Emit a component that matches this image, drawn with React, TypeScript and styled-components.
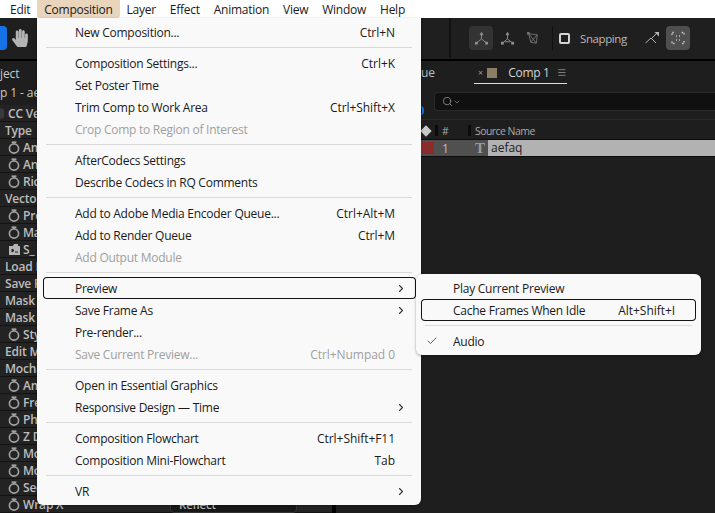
import React from "react";
import styled, {createGlobalStyle} from "styled-components";
import {FaHandPaper} from "react-icons/fa";
import {Check, ChevronDown, ChevronRight, Menu as MenuIcon, Search} from "lucide-react";

const GlobalStyle = createGlobalStyle`
  html, body {
    margin: 0;
    background: #1e1e1e;
  }
  * {
    box-sizing: border-box;
  }
`;

const Page = styled.div`
  position: relative;
  width: 715px;
  height: 513px;
  overflow: hidden;
  display: flex;
  flex-direction: column;
  background: #1e1e1e;
  font-family: "Open Sans", "Noto Sans", sans-serif;
`;

const MenuBar = styled.div`
  display: flex;
  flex: none;
  height: 18px;
  padding-left: 3px;
  background: #ffffff;
`;

const MenuBarItem = styled.div<{$active?: boolean}>`
  display: flex;
  align-items: center;
  height: 18px;
  padding: 0 7px;
  font-size: 12px;
  letter-spacing: -0.26px;
  color: #1a1a1a;
  background: ${(p) => (p.$active ? "#e9d4bc" : "transparent")};
  border-radius: ${(p) => (p.$active ? "0 0 3px 3px" : "0")};
`;

const Toolbar = styled.div`
  display: flex;
  flex: none;
  align-items: center;
  height: 43px;
  padding: 0 0 1px 0;
  background: #1f1f1f;
  border-bottom: 2px solid #000;
`;

const BlueTool = styled.div`
  width: 7px;
  height: 24px;
  background: #1473e6;
  border-radius: 0 4px 4px 0;
`;

const HandSlot = styled.div`
  display: flex;
  flex: none;
  width: 18px;
  margin-left: 4px;
  color: #b4b4b4;
`;

const ToolDivider = styled.div`
  flex: none;
  width: 2px;
  height: 40px;
  margin-left: 420px;
  background: #111;
`;

const ToolGroup = styled.div`
  display: flex;
  flex: none;
  align-items: center;
  margin-left: 18px;
`;

const ToolButton = styled.div<{$tone?: string}>`
  display: flex;
  flex: none;
  align-items: center;
  justify-content: center;
  width: 24px;
  height: 24px;
  margin-right: 2px;
  border-radius: 4px;
  background: ${(p) => p.$tone || "transparent"};
`;

const ThinRule = styled.div`
  flex: none;
  width: 1px;
  height: 24px;
  margin: 0 6px 0 5px;
  background: #111;
`;

const SnapBox = styled.div`
  flex: none;
  width: 11px;
  height: 11px;
  border: 2px solid #d4d4d4;
  border-radius: 2px;
`;

const SnapLabel = styled.span`
  margin: 0 14px 0 10px;
  width: 46px;
  font-size: 11.5px;
  letter-spacing: -0.4px;
  color: #b9b9b9;
`;

const Panels = styled.div`
  display: flex;
  flex: 1;
  min-height: 0;
`;

const LeftPanel = styled.div`
  flex: none;
  width: 332px;
  background: #1e1e1e;
`;

const PanelHead = styled.div<{$height: number; $under?: number}>`
  display: flex;
  align-items: center;
  height: ${(p) => p.$height}px;
  padding-bottom: ${(p) => p.$under || 0}px;
  font-size: 12px;
  font-weight: 500;
  letter-spacing: -0.1px;
  color: #c9c9c9;
`;

const EffectRow = styled.div`
  display: grid;
  grid-template-columns: 170px 1fr;
  align-items: center;
  height: 17px;
  background: #232323;
  border-bottom: 1px solid #131313;
  font-size: 12px;
  font-weight: 600;
  letter-spacing: -0.2px;
  color: #bdbdbd;
`;

const RowName = styled.div<{$indent: number}>`
  display: flex;
  align-items: center;
  gap: 3px;
  padding-left: ${(p) => p.$indent}px;
  white-space: nowrap;
`;

const ReflectSelect = styled.div`
  width: 127px;
  height: 16px;
  padding-left: 8px;
  font-size: 11.5px;
  line-height: 14px;
  color: #bdbdbd;
  background: #181818;
  border: 1px solid #333;
  border-radius: 4px;
`;

const Divider = styled.div`
  flex: none;
  width: 4px;
  background: #000;
`;

const RightPanel = styled.div`
  flex: 1;
  min-width: 0;
  background: #1e1e1e;
`;

const TabBar = styled.div`
  display: flex;
  align-items: flex-start;
  height: 30px;
  padding: 2px 0 0 85px;
  font-size: 12px;
  color: #bcbcbc;
`;

const TabEnd = styled.span`
  width: 53px;
  line-height: 20px;
`;

const ActiveTab = styled.div`
  display: flex;
  align-items: center;
  width: 93px;
  height: 21px;
  padding-bottom: 1px;
  border-bottom: 1px solid #dcdcdc;
  color: #d4d4d4;
`;

const TabClose = styled.span`
  width: 15px;
  font-size: 9px;
  text-align: center;
  color: #9a9a9a;
`;

const Swatch = styled.span<{$color: string}>`
  flex: none;
  width: 10px;
  height: 10px;
  background: ${(p) => p.$color};
`;

const CompName = styled.span`
  flex: none;
  width: 39px;
  margin: 0 10px 0 11px;
  letter-spacing: -0.3px;
  white-space: nowrap;
`;

const SearchRow = styled.div`
  position: relative;
  height: 29px;
  padding: 1px 0 0 98px;
  border-bottom: 1px solid #2b2b2b;
`;

const SearchBox = styled.div`
  display: flex;
  align-items: center;
  height: 19px;
  padding-left: 7px;
  color: #b4b4b4;
  background: #101010;
  border: 1px solid #2a2a2a;
  border-right: 0;
  border-radius: 4px 0 0 4px;
`;

const BlueArc = styled.span`
  position: absolute;
  left: 81px;
  top: 15px;
  width: 7px;
  height: 9px;
  border-right: 2px solid #1473e6;
  border-radius: 50%;
`;

const HeaderRow = styled.div`
  display: flex;
  align-items: center;
  height: 20px;
  padding: 2px 0 0 86px;
  border-bottom: 1px solid #0c0c0c;
  font-size: 10.5px;
  letter-spacing: -0.55px;
  color: #a9a9a9;
`;

const LabelTag = styled.span`
  flex: none;
  width: 8px;
  height: 8px;
  margin-right: 5px;
  background: #c8c8c8;
  transform: rotate(45deg);
`;

const ColumnTick = styled.span`
  flex: none;
  width: 3px;
  height: 11px;
  background: #0b0b0b;
`;

const HeaderCell = styled.span<{$width: number}>`
  flex: none;
  width: ${(p) => p.$width}px;
  padding-left: 4px;
`;

const LayerRow = styled.div`
  display: flex;
  align-items: center;
  height: 17px;
  padding-left: 85px;
  background: #505050;
  border-bottom: 1px solid #0c0c0c;
`;

const LayerLabel = styled.span`
  flex: none;
  width: 12px;
  height: 12px;
  margin-left: 1px;
  background: #8c2b2b;
`;

const LayerIndex = styled.span`
  flex: none;
  width: 32px;
  padding-left: 8px;
  font-size: 12px;
  color: #bdbdbd;
`;

const LayerType = styled.span`
  flex: none;
  width: 22px;
  padding-left: 9px;
  font-family: "Liberation Serif", serif;
  font-size: 15px;
  font-weight: 700;
  line-height: 16px;
  color: #9b9b9b;
`;

const LayerName = styled.span`
  flex: 1;
  height: 16px;
  padding-left: 3px;
  font-size: 12px;
  line-height: 16px;
  color: #222;
  background: #b2b2b2;
`;

const MenuPanel = styled.div<{$left: number; $top: number; $width: number}>`
  position: absolute;
  left: ${(p) => p.$left}px;
  top: ${(p) => p.$top}px;
  width: ${(p) => p.$width}px;
  padding: 3px 0;
  background: #f9f9f9;
  border-radius: 0 0 6px 6px;
  box-shadow: 0 1px 3px rgba(0, 0, 0, 0.35);
`;

const SubPanel = styled(MenuPanel)`
  border-radius: 6px;
`;

const Item = styled.div<{$disabled?: boolean; $focused?: boolean; $inset: number}>`
  position: relative;
  display: flex;
  align-items: center;
  height: 22px;
  margin: 0 5px 0 ${(p) => p.$inset}px;
  padding: 0 9px 0 32px;
  font-size: 12px;
  letter-spacing: -0.25px;
  color: ${(p) => (p.$disabled ? "#a0a0a0" : "#1a1a1a")};
  border-radius: 4px;
  box-shadow: ${(p) => (p.$focused ? "inset 0 0 0 1px #141414" : "none")};
`;

const ItemLabel = styled.span`
  flex: 1;
  white-space: nowrap;
`;

const Shortcut = styled.span`
  letter-spacing: -0.05px;
`;

const ArrowSlot = styled.span`
  display: flex;
  flex: none;
  justify-content: flex-end;
  width: 12px;
  color: #333;
`;

const CheckSlot = styled.span`
  position: absolute;
  left: 5px;
  display: flex;
  color: #333;
`;

const Separator = styled.div`
  height: 1px;
  margin: 4px 9px;
  background: #d9d9d9;
`;

type MenuEntry = {
  label?: string;
  shortcut?: string;
  disabled?: boolean;
  focused?: boolean;
  arrow?: boolean;
  checked?: boolean;
};

const compositionMenu: MenuEntry[] = [
  {label: "New Composition...", shortcut: "Ctrl+N"},
  {},
  {label: "Composition Settings...", shortcut: "Ctrl+K"},
  {label: "Set Poster Time"},
  {label: "Trim Comp to Work Area", shortcut: "Ctrl+Shift+X"},
  {label: "Crop Comp to Region of Interest", disabled: true},
  {},
  {label: "AfterCodecs Settings"},
  {label: "Describe Codecs in RQ Comments"},
  {},
  {label: "Add to Adobe Media Encoder Queue...", shortcut: "Ctrl+Alt+M"},
  {label: "Add to Render Queue", shortcut: "Ctrl+M"},
  {label: "Add Output Module", disabled: true},
  {},
  {label: "Preview", focused: true, arrow: true},
  {label: "Save Frame As", arrow: true},
  {label: "Pre-render..."},
  {label: "Save Current Preview...", shortcut: "Ctrl+Numpad 0", disabled: true},
  {},
  {label: "Open in Essential Graphics"},
  {label: "Responsive Design — Time", arrow: true},
  {},
  {label: "Composition Flowchart", shortcut: "Ctrl+Shift+F11"},
  {label: "Composition Mini-Flowchart", shortcut: "Tab"},
  {},
  {label: "VR", arrow: true},
];

const previewMenu: MenuEntry[] = [
  {label: "Play Current Preview"},
  {label: "Cache Frames When Idle", shortcut: "Alt+Shift+I", focused: true},
  {},
  {label: "Audio", checked: true},
];

const barItems = ["Edit", "Composition", "Layer", "Effect", "Animation", "View", "Window", "Help"];

type EffectEntry = {name: string; indent: number; icon?: "watch" | "box" | "preset"};

const effectRows: EffectEntry[] = [
  {name: "CC Ve", indent: 0, icon: "box"},
  {name: "Type", indent: 5},
  {name: "Am", indent: 8, icon: "watch"},
  {name: "An", indent: 8, icon: "watch"},
  {name: "Ric", indent: 8, icon: "watch"},
  {name: "Vector", indent: 5},
  {name: "Pro", indent: 8, icon: "watch"},
  {name: "Ma", indent: 8, icon: "watch"},
  {name: "S_", indent: 9, icon: "preset"},
  {name: "Load P", indent: 5},
  {name: "Save P", indent: 5},
  {name: "Mask f", indent: 5},
  {name: "Mask f", indent: 5},
  {name: "Sty", indent: 8, icon: "watch"},
  {name: "Edit M", indent: 5},
  {name: "Mocha", indent: 5},
  {name: "Am", indent: 8, icon: "watch"},
  {name: "Fre", indent: 8, icon: "watch"},
  {name: "Pha", indent: 8, icon: "watch"},
  {name: "Z D", indent: 8, icon: "watch"},
  {name: "Mo", indent: 8, icon: "watch"},
  {name: "Mo", indent: 8, icon: "watch"},
  {name: "See", indent: 8, icon: "watch"},
  {name: "Wrap X", indent: 8, icon: "watch"},
];

const StopwatchIcon = () => (
  <svg width="12" height="13" viewBox="0 0 12 13" fill="none" stroke="#a3a3a3" strokeWidth="1.6">
    <circle cx="6" cy="7.5" r="4.6" />
    <path d="M3.6 1.2h4.8" />
    <path d="M6 1.2v1.6" />
  </svg>
);

const PresetIcon = () => (
  <svg width="11" height="11" viewBox="0 0 11 11">
    <path d="M0 2h4l1-2h4v2h2v9H0z" fill="#b5b5b5" />
    <path d="M3 5l2 1.5L3 8zM6 8h3" stroke="#222" fill="#222" />
  </svg>
);

const SmallBox = () => (
  <svg width="5" height="11" viewBox="0 0 5 11">
    <rect x="-4" y="0.5" width="8" height="10" rx="2" fill="#3a3a3a" />
  </svg>
);

const AxisIcon = ({boxed}: {boxed?: boolean}) => (
  <svg width="15" height="15" viewBox="0 0 16 16" fill="none" stroke="#8e8e8e" strokeWidth="1">
    <path d="M8 3v5.5M8 8.5l-5 4M8 8.5l5 4" />
    {boxed && <path d="M5 11.5h6" />}
    <path d="M6.5 4 8 1.5 9.5 4z" fill="#8e8e8e" />
    <rect x="1" y="11.5" width="3" height="3" fill="#8e8e8e" stroke="none" />
    <rect x="12" y="11.5" width="3" height="3" fill="#8e8e8e" stroke="none" />
  </svg>
);

const PlaneIcon = () => (
  <svg width="15" height="15" viewBox="0 0 16 16" fill="none" stroke="#6f6f6f" strokeWidth="1">
    <path d="M3 3l9 1-1 9-6-1zM3 3l8 10M12 4l-7 8" />
    <rect x="1" y="1" width="3" height="3" fill="#6f6f6f" stroke="none" />
  </svg>
);

const SnapArrowIcon = () => (
  <svg width="16" height="16" viewBox="0 0 16 16" fill="none" stroke="#b5b5b5" strokeWidth="1">
    <path d="M1.5 13 7 8l5 5" />
    <path d="M8 8l5-5" />
    <path d="M10.5 2H15v4.5z" fill="#b5b5b5" stroke="none" />
  </svg>
);

const FocusIcon = () => (
  <svg width="16" height="16" viewBox="0 0 16 16" fill="none" stroke="#c4c4c4" strokeWidth="1.4">
    <path d="M2 5V2.5h2.5M11.5 2.5H14V5M14 11v2.5h-2.5M4.5 13.5H2V11" strokeDasharray="1.6 1.2" />
    <path d="M6 6h1M9 6h1M6 10h1M9 10h1" />
  </svg>
);

const MenuRows = ({entries, inset}: {entries: MenuEntry[]; inset: number}) => (
  <>
    {entries.map((entry, idx) =>
      entry.label ? (
        <Item key={idx} $disabled={entry.disabled} $focused={entry.focused} $inset={inset}>
          {entry.checked && (
            <CheckSlot>
              <Check size={12} strokeWidth={1.6} />
            </CheckSlot>
          )}
          <ItemLabel>{entry.label}</ItemLabel>
          {entry.shortcut && <Shortcut>{entry.shortcut}</Shortcut>}
          <ArrowSlot>{entry.arrow && <ChevronRight size={13} strokeWidth={2.2} />}</ArrowSlot>
        </Item>
      ) : (
        <Separator key={idx} />
      )
    )}
  </>
);

export default function App() {
  return (
    <Page>
      <GlobalStyle />
      <MenuBar>
        {barItems.map((name) => (
          <MenuBarItem key={name} $active={name === "Composition"}>
            {name}
          </MenuBarItem>
        ))}
      </MenuBar>

      <Toolbar>
        <BlueTool />
        <HandSlot>
          <FaHandPaper size={18} />
        </HandSlot>
        <ToolDivider />
        <ToolGroup>
          <ToolButton $tone="#333333">
            <AxisIcon />
          </ToolButton>
          <ToolButton>
            <AxisIcon boxed />
          </ToolButton>
          <ToolButton>
            <PlaneIcon />
          </ToolButton>
          <ThinRule />
          <SnapBox />
          <SnapLabel>Snapping</SnapLabel>
          <ToolButton>
            <SnapArrowIcon />
          </ToolButton>
          <ToolButton $tone="#4f4f4f">
            <FocusIcon />
          </ToolButton>
        </ToolGroup>
      </Toolbar>

      <Panels>
        <LeftPanel>
          <PanelHead $height={24}>ject</PanelHead>
          <PanelHead $height={20} $under={6}>
            p 1 - ae
          </PanelHead>
          {effectRows.map((row, idx) => (
            <EffectRow key={idx}>
              <RowName $indent={row.indent}>
                {row.icon === "watch" && <StopwatchIcon />}
                {row.icon === "box" && <SmallBox />}
                {row.icon === "preset" && <PresetIcon />}
                {row.name}
              </RowName>
              {row.name === "Wrap X" && <ReflectSelect>Reflect</ReflectSelect>}
            </EffectRow>
          ))}
        </LeftPanel>
        <Divider />
        <RightPanel>
          <TabBar>
            <TabEnd>ue</TabEnd>
            <ActiveTab>
              <TabClose>×</TabClose>
              <Swatch $color="#8c7d66" />
              <CompName>Comp 1</CompName>
              <MenuIcon size={11} strokeWidth={1.3} />
            </ActiveTab>
          </TabBar>
          <SearchRow>
            <BlueArc />
            <SearchBox>
              <Search size={11} strokeWidth={1.4} />
              <ChevronDown size={8} strokeWidth={1.6} />
            </SearchBox>
          </SearchRow>
          <HeaderRow>
            <LabelTag />
            <ColumnTick />
            <HeaderCell $width={30}>#</HeaderCell>
            <ColumnTick />
            <HeaderCell $width={80}>Source Name</HeaderCell>
          </HeaderRow>
          <LayerRow>
            <LayerLabel />
            <LayerIndex>1</LayerIndex>
            <LayerType>T</LayerType>
            <LayerName>aefaq</LayerName>
          </LayerRow>
        </RightPanel>
      </Panels>

      <MenuPanel $left={37} $top={18} $width={384}>
        <MenuRows entries={compositionMenu} inset={6} />
      </MenuPanel>
      <SubPanel $left={416} $top={274} $width={285}>
        <MenuRows entries={previewMenu} inset={5} />
      </SubPanel>
    </Page>
  );
}
